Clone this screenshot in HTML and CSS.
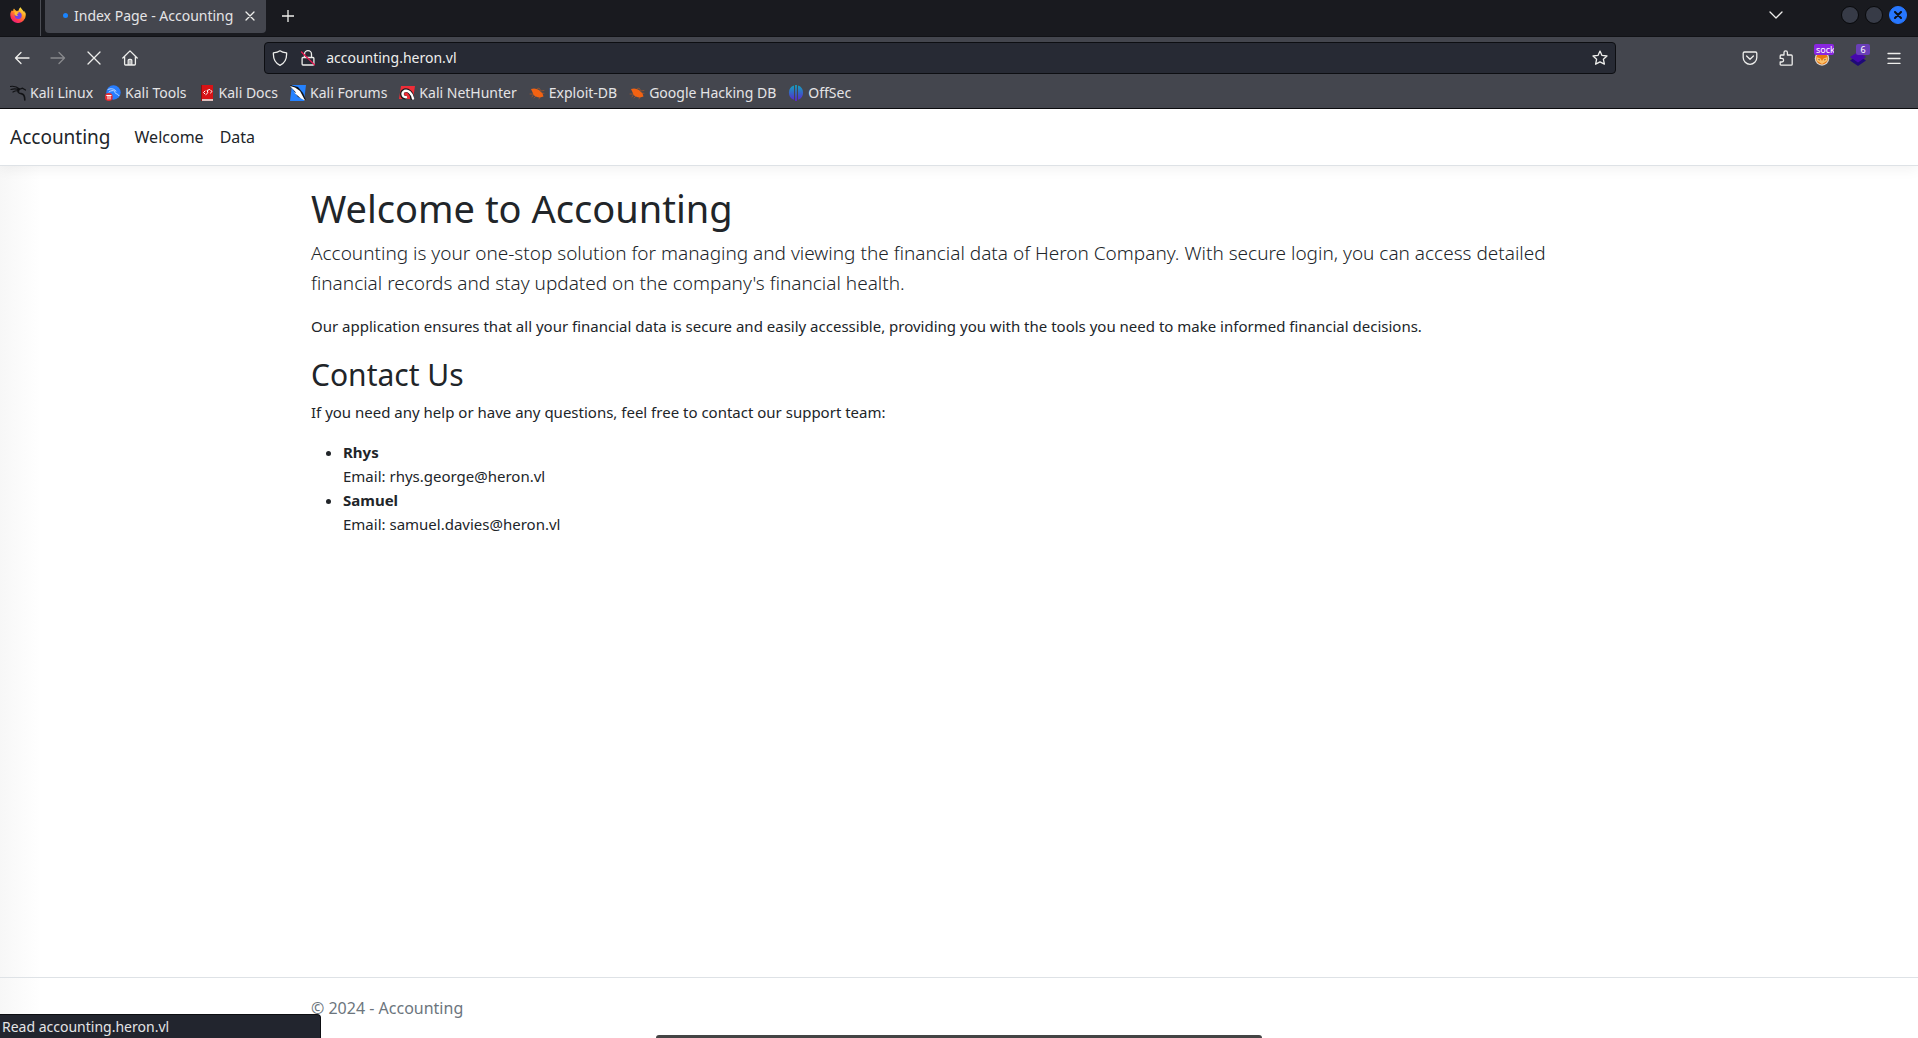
FILE: index.html
```html
<!DOCTYPE html>
<html lang="en">
<head>
    <meta charset="UTF-8">
    <meta name="viewport" content="width=device-width, initial-scale=1.0">
    <title>Index Page - Accounting</title>
    <link rel="stylesheet" href="styles.css">
</head>
<body>
    <div class="browser">
        <div class="tab-strip">
            <button class="firefox-view" aria-label="Firefox View">
                <svg width="16" height="16" viewBox="0 0 16 16">
                    <defs>
                        <linearGradient id="fire" x1="0.8" y1="0" x2="0.2" y2="1">
                            <stop offset="0" stop-color="#fff44f"/>
                            <stop offset="0.4" stop-color="#ff9a1f"/>
                            <stop offset="0.75" stop-color="#ff3750"/>
                            <stop offset="1" stop-color="#e31587"/>
                        </linearGradient>
                    </defs>
                    <path fill="url(#fire)" d="M15.6 6.2c-.4-.9-1.2-1.8-1.8-2.1.3.6.6 1.2.7 1.8C13.500 3.400 11.600 2.500 10.600.3c-1.300.8-1.900 2.300-1.900 3.100-.7 0-1.300.2-1.900.5L5.200 3.100 4 1.500C3.300 2.300 3.100 3 3.200 3.900L1.700 3.600C.7 5.100.2 6.500.3 8.300a7.700 7.700 0 0 0 15.400.1c.1-.7.1-1.500-.1-2.200z"/>
                    <circle cx="8.200" cy="8.400" r="3.500" fill="#7543e3"/>
                    <path fill="#ffbd2e" d="M3.200 4.400c1.500-.6 2.800-.1 3.600.7.900.1 2 .2 2.100.7-.2.800-1.400 1-1.700 1.300-.4.6.1 1.300 1 1.200-1 1.100-2.900.7-3.500-.7-.3-.9 0-1.700.4-2.100z"/>
                </svg>
            </button>
            <div class="tab">
                <span class="tab-busy"></span>
                <span class="tab-title">Index Page - Accounting</span>
                <button class="tab-close" aria-label="Close tab">
                    <svg width="10" height="10" viewBox="0 0 10 10"><path d="M1 1l8 8M9 1l-8 8"/></svg>
                </button>
            </div>
            <button class="new-tab" aria-label="Open a new tab">
                <svg width="12" height="12" viewBox="0 0 12 12"><path d="M6 0v12M0 6h12"/></svg>
            </button>
            <button class="all-tabs" aria-label="List all tabs">
                <svg width="14" height="8" viewBox="0 0 14 8"><path d="M1 1l6 6 6-6"/></svg>
            </button>
            <div class="window-controls">
                <button class="win-btn" aria-label="Minimize"></button>
                <button class="win-btn" aria-label="Maximize"></button>
                <button class="win-btn win-close" aria-label="Close">
                    <svg width="8" height="8" viewBox="0 0 8 8"><path d="M1 1l6 6M7 1l-6 6"/></svg>
                </button>
            </div>
        </div>

        <div class="nav-bar">
            <button class="tool" aria-label="Back">
                <svg width="16" height="16" viewBox="0 0 16 16"><path d="M15 8H1.500M7 2.500L1.500 8 7 13.500"/></svg>
            </button>
            <button class="tool" aria-label="Forward" disabled>
                <svg width="16" height="16" viewBox="0 0 16 16"><path d="M1 8h13.500M9 2.500L14.500 8 9 13.500"/></svg>
            </button>
            <button class="tool" aria-label="Stop">
                <svg width="16" height="16" viewBox="0 0 16 16"><path d="M2 2l12 12M14 2L2 14"/></svg>
            </button>
            <button class="tool" aria-label="Home">
                <svg width="16" height="16" viewBox="0 0 16 16"><path d="M.8 8L8 .9 15.200 8M2.600 6.500V14q0 1 1 1h8.800q1 0 1-1V6.500M6.200 15v-4.500q0-1 1-1h1.600q1 0 1 1V15M8 11v4"/></svg>
            </button>
            <div class="spacer"></div>
            <div class="url-bar">
                <svg class="url-icon" width="16" height="16" viewBox="0 0 16 16"><path d="M8 .8C9.600 2.100 12 2.700 14.600 2.900 14.900 8.500 13.200 13 8 15.300 2.800 13 1.100 8.500 1.400 2.900 4 2.700 6.400 2.100 8 .8z"/></svg>
                <svg class="url-icon" width="16" height="16" viewBox="0 0 16 16"><path d="M4.500 7V4.200a3.500 3.500 0 0 1 7 0V7M3 7.500h10q.9 0 .9.9v5.700q0 .9-.9.9H3q-.9 0-.9-.9V8.400q0-.9.900-.9z"/><path class="insecure" d="M1.500 2l13 12.800"/></svg>
                <input class="url-input" type="text" value="accounting.heron.vl" aria-label="Address">
                <svg class="url-icon" width="16" height="16" viewBox="0 0 16 16"><path d="M8 1.100l2 4.300 5 .6-3.600 3.300 1 4.900L8 11.900l-4.400 2.300 1-4.900L1 6l5-.6z"/></svg>
            </div>
            <div class="spacer"></div>
            <button class="tool" aria-label="Save to Pocket">
                <svg width="16" height="16" viewBox="0 0 16 16"><path d="M2.500 2h11q1.300 0 1.300 1.300V7.500a6.800 6.800 0 0 1-13.600 0V3.300Q1.200 2 2.500 2zM4.600 6L8 9.200 11.400 6"/></svg>
            </button>
            <button class="tool" aria-label="Extensions">
                <svg width="16" height="16" viewBox="0 0 16 16"><path d="M6 5V2.600a1.700 1.700 0 0 1 3.400 0V5h3.800q1 0 1 1v8.200q0 1-1 1H3q-.8 0-.8-1V12h1.600a1.700 1.700 0 0 0 0-3.600H2.200V6q0-1 .8-1z"/></svg>
            </button>
            <button class="tool" aria-label="FoxyProxy">
                <svg class="addon" width="16" height="16" viewBox="0 0 16 16"><circle cx="8" cy="8.500" r="7.200" fill="#d9d2cb"/><circle cx="8" cy="8.500" r="5.900" fill="#e8760f"/><path fill="#fbc06a" d="M2.500 7l4 1.500L8 11l1.500-2.500 4-1.500-.5 4L8 14l-5-3z"/><path fill="#4d3424" d="M4 9l2 .8-.7.7zM12 9l-2 .8.7.7z"/></svg>
                <span class="badge badge-socks">sock</span>
            </button>
            <button class="tool" aria-label="Wappalyzer">
                <svg class="addon" width="16" height="16" viewBox="0 0 16 16"><path fill="#1f0a78" d="M0 10.500L8 5l8 5.500L8 16z"/><path fill="#4608ad" d="M0 7l8-5 8 5-8 5.500z"/></svg>
                <span class="badge badge-count">6</span>
            </button>
            <button class="tool" aria-label="Menu">
                <svg width="14" height="12" viewBox="0 0 14 12"><path d="M1 1.500h12M1 6.500h12M1 11.500h12"/></svg>
            </button>
        </div>

        <nav class="bookmarks" aria-label="Bookmarks">
            <a class="bookmark" href="#">
                <svg width="16" height="16" viewBox="0 0 16 16"><g fill="none" stroke="#111215"><path stroke-width="1.200" d="M0 1.500c4-.8 7 .2 9.500 2.500M1 4.500c3-.9 5.500-.8 8 .4M3 7c2-1.200 4-1.500 6-1"/><path stroke-width="1.600" d="M8.500 4c-1.500 3 .2 4.400 2.700 4.600 2.500.3 3.600 2 3.600 6.400"/><path stroke-width="1.300" d="M9 4.500l3.500-1.300L15.500 5"/></g></svg>
                Kali Linux
            </a>
            <a class="bookmark" href="#">
                <svg width="16" height="16" viewBox="0 0 16 16"><circle cx="8.500" cy="7.500" r="7.200" fill="#277dff"/><path fill="none" stroke="#c5dcff" stroke-width="1" d="M3 4.500c3-1.400 6-.8 8 1.500M4 7C6 5.500 8 5.200 10 6.200c-1 3 3 2 4 4.500"/><circle cx="3.800" cy="12" r="3.900" fill="#e52b31"/><path fill="none" stroke="#fff" stroke-width="1" d="M1.700 10.500h4.400M3 10.500v3.500M5 10.500v3.500"/></svg>
                Kali Tools
            </a>
            <a class="bookmark" href="#">
                <svg width="16" height="16" viewBox="0 0 16 16"><path fill="#8d1010" d="M2 0h2v16H2z"/><path fill="#d81316" d="M3 0h11v14H3z"/><path fill="#dfc0bd" d="M3 14h11v2H3z"/><path fill="none" stroke="#fff" stroke-width="1" d="M6 6L4.500 7.500 6 9M11.500 5L13 6.500 11.500 8M10.500 4.500L8 5.500l1 2L7 9.500"/></svg>
                Kali Docs
            </a>
            <a class="bookmark" href="#">
                <svg width="16" height="16" viewBox="0 0 16 16"><path fill="#2582ff" d="M2 0H16l-2 16H0z"/><path fill="#111318" d="M0 0l8 2 5 6 3 7-8-3z"/><path fill="#fff" d="M0 1l5 1.500L10 6l5 9.500-4-2-7-6 2.200.2z"/></svg>
                Kali Forums
            </a>
            <a class="bookmark" href="#">
                <svg width="16" height="16" viewBox="0 0 16 16"><path fill="#ee2d38" d="M2 1H16l-2 13H0z"/><path fill="none" stroke="#17181b" stroke-width="4" d="M13 13C13 8 9 4.500 5.500 5.500 2 7 2.500 12 6 12.500"/><path fill="none" stroke="#fff" stroke-width="2.400" d="M14 13.500C13 8 9 4.800 5.500 6 2.500 7.500 3 12 7 12.300"/></svg>
                Kali NetHunter
            </a>
            <a class="bookmark" href="#">
                <svg width="16" height="16" viewBox="0 0 16 16"><path fill="none" stroke="#8d5233" stroke-width="1" d="M1 9l4 0-2 3M8 4L10 3l2 3 3-.5M7 11l-2 2M11 12l-1 2M12 8l3 .3"/><path fill="#f26212" d="M2 4Q6 2.500 10 5L13.500 8.500l1 3-3.500 1Q6 12 4.500 9.500z"/></svg>
                Exploit-DB
            </a>
            <a class="bookmark" href="#">
                <svg width="16" height="16" viewBox="0 0 16 16"><path fill="none" stroke="#8d5233" stroke-width="1" d="M1 9l4 0-2 3M8 4L10 3l2 3 3-.5M7 11l-2 2M11 12l-1 2M12 8l3 .3"/><path fill="#f26212" d="M2 4Q6 2.500 10 5L13.500 8.500l1 3-3.500 1Q6 12 4.500 9.500z"/></svg>
                Google Hacking DB
            </a>
            <a class="bookmark" href="#">
                <svg width="16" height="16" viewBox="0 0 16 16">
                    <defs>
                        <linearGradient id="offsec" x1="0" y1="0" x2="0" y2="1">
                            <stop offset="0" stop-color="#12a5bd"/>
                            <stop offset="1" stop-color="#5a22cf"/>
                        </linearGradient>
                    </defs>
                    <path fill="url(#offsec)" d="M6 .6v14.200A7.500 7.500 0 0 1 6 .6zM7.100 0h1.800v16H7.100zM10 .6a7.500 7.500 0 0 1 0 14.200z"/>
                </svg>
                OffSec
            </a>
        </nav>
    </div>

    <div class="page">
        <header>
            <nav class="navbar">
                <a class="navbar-brand" href="#">Accounting</a>
                <a class="nav-link" href="#">Welcome</a>
                <a class="nav-link" href="#">Data</a>
            </nav>
        </header>

        <main class="container">
            <h1>Welcome to Accounting</h1>
            <p class="lead">Accounting is your one-stop solution for managing and viewing the financial data of Heron Company. With secure login, you can access detailed financial records and stay updated on the company's financial health.</p>
            <p>Our application ensures that all your financial data is secure and easily accessible, providing you with the tools you need to make informed financial decisions.</p>
            <h2>Contact Us</h2>
            <p>If you need any help or have any questions, feel free to contact our support team:</p>
            <ul>
                <li><strong>Rhys</strong><br>Email: rhys.george@heron.vl</li>
                <li><strong>Samuel</strong><br>Email: samuel.davies@heron.vl</li>
            </ul>
        </main>

        <footer class="footer">
            <div class="container">&copy; 2024 - Accounting</div>
        </footer>
    </div>

    <div class="status-panel">Read accounting.heron.vl</div>
    <div class="dock"></div>
</body>
</html>
```
FILE: styles.css
```css
* {
    box-sizing: border-box;
}

body {
    margin: 0;
    min-height: 100vh;
    display: flex;
    flex-direction: column;
    position: relative;
    font-family: "Noto Sans", sans-serif;
    font-size: 16px;
    line-height: 24px;
    color: #212529;
    background: #fff;
}

a {
    color: inherit;
    text-decoration: none;
}

button {
    display: flex;
    align-items: center;
    justify-content: center;
    padding: 0;
    border: none;
    background: none;
    font-family: inherit;
}

/* browser chrome */
.browser {
    background: #44464e;
    border-bottom: 1px solid #0c0c0f;
    color: #e4e4e6;
    font-size: 14px;
}

.browser svg {
    flex: none;
    fill: none;
    stroke: #eeeeec;
    stroke-width: 1.3;
    stroke-linecap: round;
    stroke-linejoin: round;
}

.tab-strip {
    display: flex;
    height: 37px;
    padding-right: 11px;
    background: #191a1f;
    border-bottom: 1px solid #111216;
}

.firefox-view {
    width: 41px;
    padding: 0 4px 6px 0;
    border-right: 1px solid #4b4d54;
}

.browser .firefox-view svg,
.browser .bookmark svg,
.browser .addon {
    stroke: none;
}

.tab {
    display: flex;
    align-items: center;
    width: 221px;
    height: 33px;
    margin-left: 4px;
    padding: 0 11px 2px 18px;
    border-radius: 0 0 4px 4px;
    background: #44464e;
}

.tab-busy {
    width: 5px;
    height: 5px;
    margin-right: 6px;
    border-radius: 50%;
    background: #1a84ff;
}

.tab-title {
    flex: 1;
    white-space: nowrap;
}

.tab-close,
.new-tab {
    height: 31px;
}

.new-tab {
    width: 43px;
}

.all-tabs {
    height: 30px;
    margin-left: auto;
}

.window-controls {
    display: flex;
    align-items: center;
    gap: 6px;
    height: 30px;
    margin-left: 58px;
}

.win-btn {
    width: 18px;
    height: 18px;
    border: 1px solid #08090b;
    border-radius: 50%;
    background: #373b47;
}

.win-close {
    border-color: #2777ff;
    background: #2777ff;
}

.browser .win-close svg {
    stroke: #0d1118;
    stroke-width: 2;
}

.nav-bar {
    display: flex;
    align-items: center;
    height: 41px;
    padding: 0 6px 0 4px;
}

.tool {
    position: relative;
    width: 36px;
    height: 32px;
}

.tool:disabled {
    opacity: 0.4;
}

.spacer {
    flex: 2;
}

.url-bar {
    flex: 23;
    display: flex;
    align-items: center;
    gap: 12px;
    height: 32px;
    padding: 0 7px;
    border: 1px solid #0d0e12;
    border-radius: 4px;
    background: #272a34;
}

.url-input {
    flex: 1;
    min-width: 0;
    margin-left: -2px;
    padding: 0;
    border: none;
    outline: none;
    background: none;
    color: #eeeeec;
    font: inherit;
}

.browser .insecure {
    stroke: #e3174f;
}

/* counters over the add-on icons */
.badge {
    position: absolute;
    top: 2px;
    height: 11px;
    overflow: hidden;
    border-radius: 2px;
    color: #fff;
    font-size: 9px;
    line-height: 11px;
}

.badge-socks {
    left: 10px;
    width: 20px;
    padding-left: 2px;
    text-align: left;
    background: #8a26e0;
}

.badge-count {
    left: 16px;
    width: 14px;
    background: #6a3fb8;
}

.bookmarks {
    display: flex;
    align-items: center;
    gap: 12px;
    height: 30px;
    padding: 0 10px;
}

.bookmark {
    display: flex;
    align-items: center;
    gap: 4px;
    white-space: nowrap;
}

/* web page */
.page {
    flex: 1;
    display: flex;
    flex-direction: column;
    background: linear-gradient(to right, #f7f7f7, #fff 40px);
}

.navbar {
    display: flex;
    align-items: center;
    height: 57px;
    margin-bottom: 16px;
    padding: 0 10px;
    border-bottom: 1px solid #dee2e6;
    background: #fff;
    box-shadow: 0 4px 12px rgba(0, 0, 0, 0.05);
}

.navbar-brand {
    margin-right: 16px;
    font-size: 19px;
}

.nav-link {
    padding: 8px;
}

.container {
    width: 100%;
    max-width: 1320px;
    margin: 0 auto;
    padding: 0 12px;
}

main.container {
    flex: 1;
    font-size: 15px;
}

h1,
h2 {
    margin: 0 0 4px;
    font-weight: 400;
}

h1 {
    font-size: 38px;
    line-height: 52px;
}

h2 {
    font-size: 30px;
    line-height: 42px;
}

p,
ul {
    margin: 0 0 16px;
}

ul {
    padding-left: 32px;
}

.lead {
    font-size: 19px;
    font-weight: 300;
    line-height: 30px;
}

.footer {
    border-top: 1px solid #dee2e6;
    color: #6c757d;
    line-height: 60px;
}

/* link status, laid over the page */
.status-panel {
    position: absolute;
    left: 0;
    bottom: 0;
    width: 321px;
    height: 24px;
    padding-left: 2px;
    border: 1px solid #0d0e12;
    border-width: 1px 1px 0 0;
    border-radius: 0 4px 0 0;
    background: #22252e;
    color: #e4e4e6;
    font-size: 14px;
}

/* top edge of the desktop dock */
.dock {
    position: absolute;
    left: 50%;
    bottom: 0;
    width: 606px;
    height: 3px;
    transform: translateX(-50%);
    border-radius: 4px 4px 0 0;
    background: #444;
}
```
